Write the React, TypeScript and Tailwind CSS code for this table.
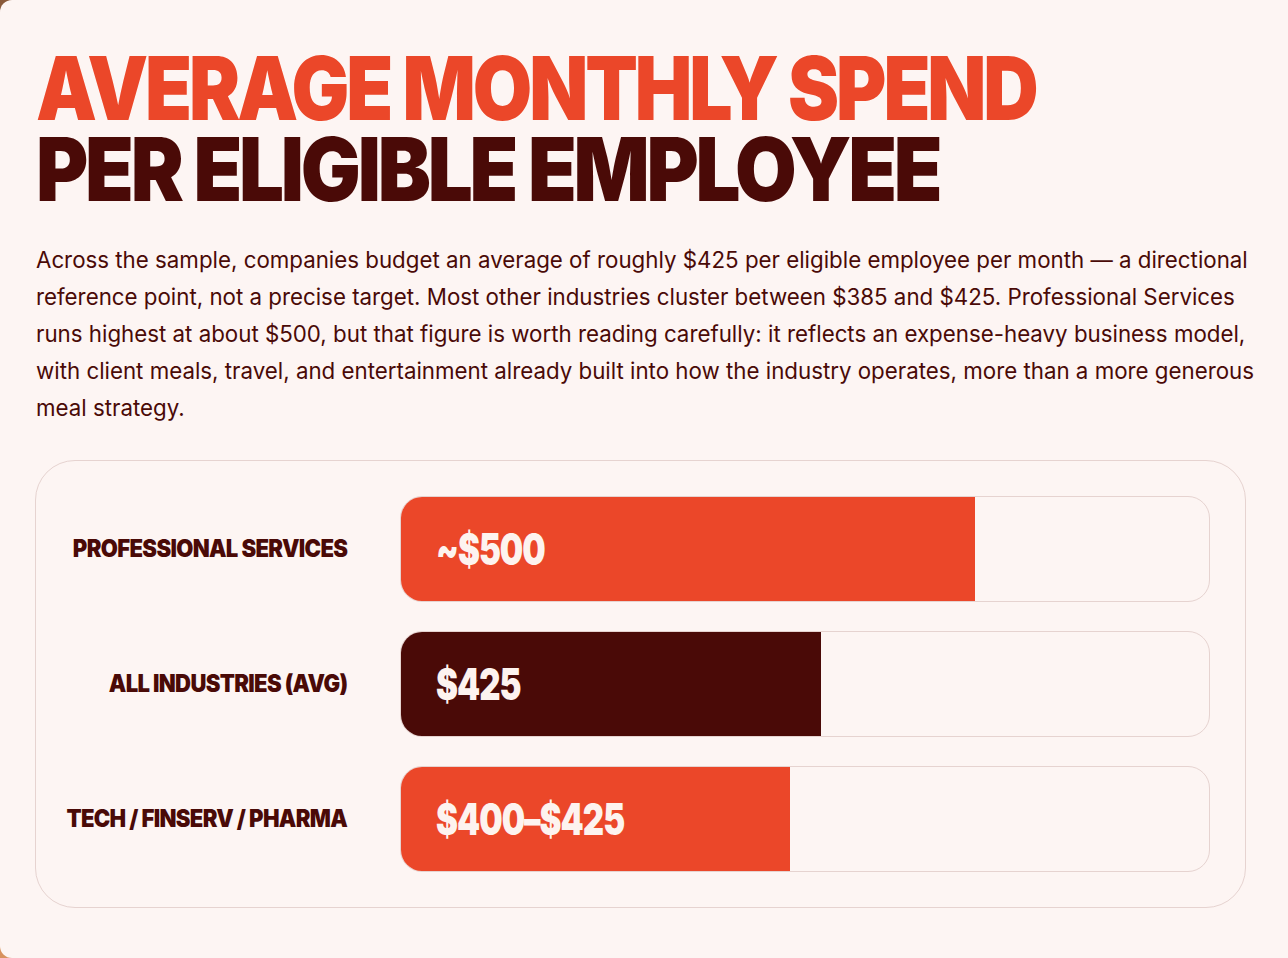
import React from "react";

const rows = [
  { label: "PROFESSIONAL SERVICES", value: "~$500", pct: 71.1, color: "bg-[#eb4729]" },
  { label: "ALL INDUSTRIES (AVG)", value: "$425", pct: 52, color: "bg-[#4a0a07]" },
  { label: "TECH / FINSERV / PHARMA", value: "$400–$425", pct: 48.1, color: "bg-[#eb4729]" },
];

export default function App() {
  return (
    <div className="w-[1288px] h-[958px] bg-gradient-to-b from-[#8a5a3a] to-[#d8925e] overflow-hidden">
      <div
        className="h-full w-full rounded-l-[12px] bg-[#fdf5f3] pl-[36px] pt-[48px] text-[#4a0a07]"
        style={{ fontFamily: "Inter, 'Noto Sans', sans-serif" }}
      >
        <h1 className="font-black text-[88px] leading-[81px] tracking-[-0.04em]">
          <span className="inline-block origin-left scale-x-[0.872] whitespace-nowrap text-[#eb4729]">
            AVERAGE MONTHLY SPEND
          </span>
          <br />
          <span className="inline-block origin-left scale-x-[0.905] whitespace-nowrap">
            PER ELIGIBLE EMPLOYEE
          </span>
        </h1>
        <p className="mt-[31px] text-[22.3px] leading-[37px] whitespace-nowrap">
          Across the sample, companies budget an average of roughly $425 per eligible employee per month — a directional
          <br />
          reference point, not a precise target. Most other industries cluster between $385 and $425. Professional Services
          <br />
          runs highest at about $500, but that figure is worth reading carefully: it reflects an expense-heavy business model,
          <br />
          with client meals, travel, and entertainment already built into how the industry operates, more than a more generous
          <br />
          meal strategy.
        </p>
        <div className="mt-[34px] w-[1211px] -ml-[1px] rounded-[40px] border border-[#e6d3d0] py-[35px] pr-[35px] pl-[24px] flex flex-col gap-[29px]">
          {rows.map((r) => (
            <div key={r.label} className="flex items-center gap-[53px]">
              <div className="w-[287px] shrink-0 flex justify-end">
                <span className="inline-block origin-right scale-x-[0.92] whitespace-nowrap font-black text-[24px] tracking-[-0.03em]">
                  {r.label}
                </span>
              </div>
              <div className="w-[810px] shrink-0 h-[106px] rounded-[22px] border border-[#e6d3d0] bg-[#fdf5f3] overflow-hidden flex">
                <div
                  className={`${r.color} h-full flex items-center pl-[35px]`}
                  style={{ width: `${r.pct}%` }}
                >
                  <span className="inline-block origin-left scale-x-[0.75] whitespace-nowrap font-black text-[44px] tracking-[-0.03em] text-[#fdf3ef]">
                    {r.value}
                  </span>
                </div>
              </div>
            </div>
          ))}
        </div>
      </div>
    </div>
  );
}
